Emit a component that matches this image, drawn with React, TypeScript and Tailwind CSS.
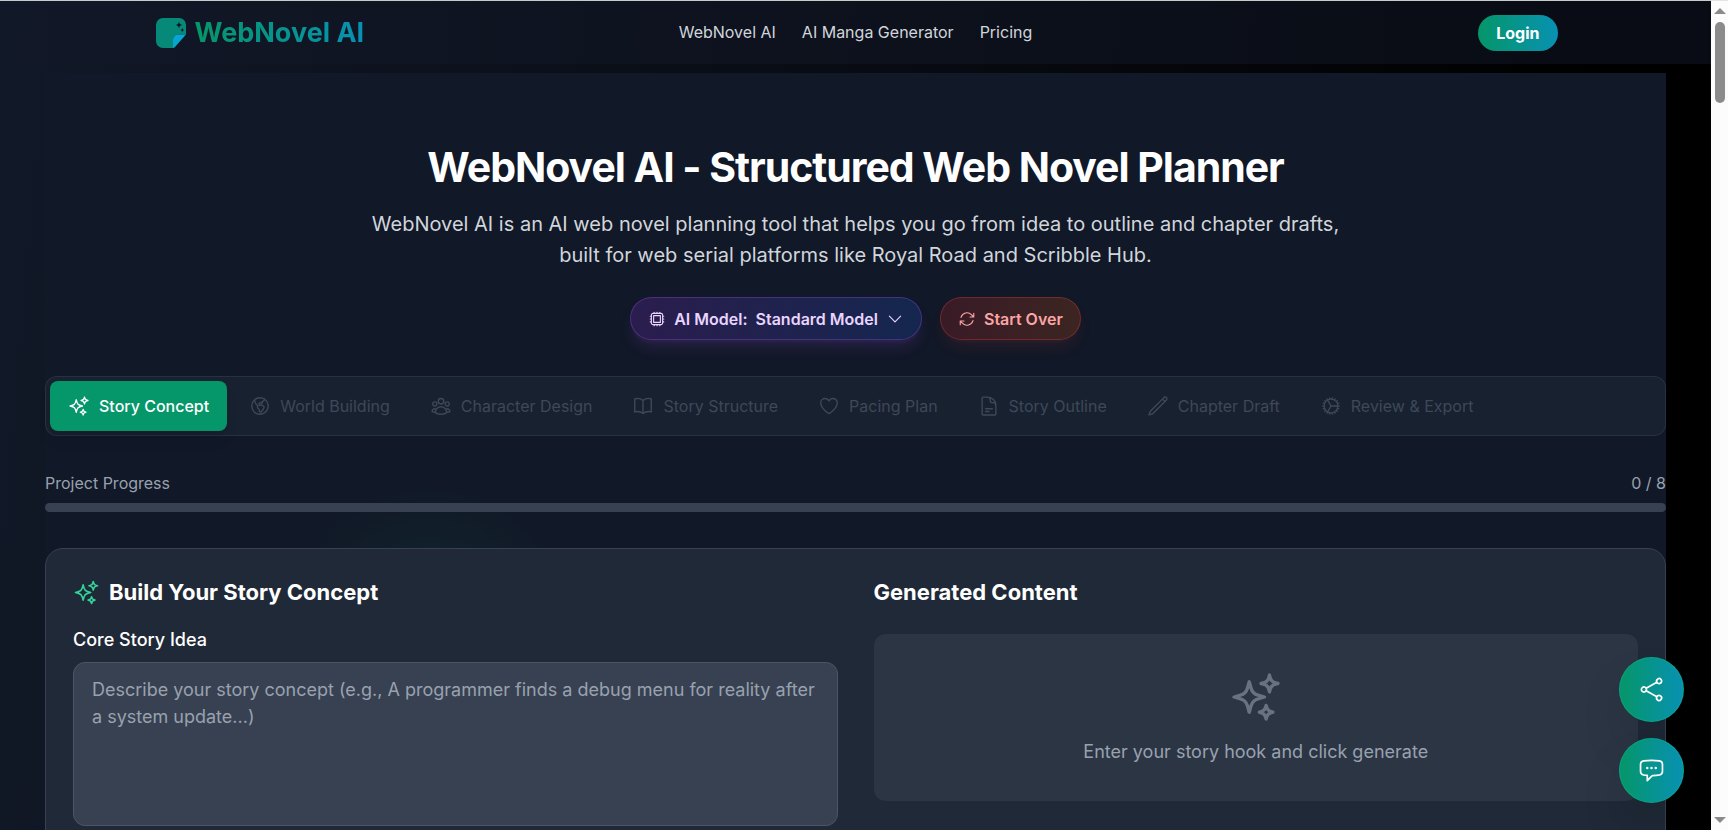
import React, { useState } from 'react';
import type { IconType } from 'react-icons';
import {
  HiOutlineArrowPath,
  HiOutlineBookOpen,
  HiOutlineChatBubbleLeftEllipsis,
  HiOutlineChevronDown,
  HiOutlineCog,
  HiOutlineCpuChip,
  HiOutlineDocumentText,
  HiOutlineGlobeAmericas,
  HiOutlineHeart,
  HiOutlinePencil,
  HiOutlineShare,
  HiOutlineSparkles,
  HiOutlineUserGroup,
} from 'react-icons/hi2';

const steps: { label: string; icon: IconType }[] = [
  { label: 'Story Concept', icon: HiOutlineSparkles },
  { label: 'World Building', icon: HiOutlineGlobeAmericas },
  { label: 'Character Design', icon: HiOutlineUserGroup },
  { label: 'Story Structure', icon: HiOutlineBookOpen },
  { label: 'Pacing Plan', icon: HiOutlineHeart },
  { label: 'Story Outline', icon: HiOutlineDocumentText },
  { label: 'Chapter Draft', icon: HiOutlinePencil },
  { label: 'Review & Export', icon: HiOutlineCog },
];

function Logo() {
  return (
    <svg viewBox="-2 -1 32 32" className="size-8" aria-hidden="true">
      <path d="M7 0h16a7 7 0 0 1 7 7v9.5H22a5 5 0 0 0-5 5V30H7a7 7 0 0 1-7-7V7a7 7 0 0 1 7-7z" fill="#07897a" />
      <path d="M30 16.5 18.500 29.500 17 30v-8.500a5 5 0 0 1 5-5z" fill="#06a6d0" />
      <path d="M23 3.500c.5 2.300 1 2.900 3.300 3.500-2.300.6-2.800 1.200-3.300 3.500-.5-2.300-1-2.900-3.300-3.500 2.300-.6 2.800-1.200 3.300-3.500z" fill="#0c1420" />
      <path d="M26.300 9.800c.3 1.400.7 1.800 2 2.200-1.300.4-1.700.8-2 2.200-.3-1.400-.7-1.800-2-2.200 1.300-.4 1.700-.8 2-2.200z" fill="#0c1420" />
    </svg>
  );
}

function Header() {
  return (
    <header className="border-t border-[#c5cdca] bg-[#111827]/50">
      <div className="mx-auto grid h-[63px] max-w-[1404px] grid-cols-[1fr_auto_1fr] items-center">
        <a href="#" className="flex items-center gap-[9px]">
          <Logo />
          <span className="bg-linear-to-r/srgb from-[#059669] to-[#0891b2] bg-clip-text text-[27px] leading-9 font-bold text-transparent">
            WebNovel AI
          </span>
        </a>
        <nav className="flex gap-[26px] pb-0.5 text-base text-gray-300">
          <a href="#" className="hover:text-white">WebNovel AI</a>
          <a href="#" className="hover:text-white">AI Manga Generator</a>
          <a href="#" className="hover:text-white">Pricing</a>
        </nav>
        <button
          type="button"
          className="justify-self-end rounded-full bg-linear-to-r/srgb from-[#059669] to-[#0891b2] px-[18px] py-1.5 text-base font-bold text-white"
        >
          Login
        </button>
      </div>
    </header>
  );
}

function Hero() {
  return (
    <section className="flex flex-col items-center pt-[69px] text-center">
      <h1 className="text-[41px] leading-[50px] font-bold tracking-tight text-white">
        WebNovel AI - Structured Web Novel Planner
      </h1>
      <p className="mt-[17px] max-w-[1008px] text-xl leading-[31px] text-gray-300">
        WebNovel AI is an AI web novel planning tool that helps you go from idea to outline and chapter drafts,
        built for web serial platforms like Royal Road and Scribble Hub.
      </p>
      <div className="mt-[26px] flex gap-[18px] text-base font-semibold">
        <button
          type="button"
          className="flex h-[43px] items-center gap-2 rounded-full border border-[#a855f7]/30 bg-linear-to-r/srgb from-[#9333ea]/20 to-[#2563eb]/20 px-[17px] text-[#e9d5ff] shadow-lg shadow-[#a855f7]/15"
        >
          <HiOutlineCpuChip className="size-[18px]" />
          <span>AI Model:</span>
          <span>Standard Model</span>
          <HiOutlineChevronDown className="size-[18px]" />
        </button>
        <button
          type="button"
          className="flex h-[43px] items-center gap-2 rounded-full border border-[#ef4444]/30 bg-linear-to-r/srgb from-[#dc2626]/20 to-[#ea580c]/20 px-[17px] text-[#fca5a5] shadow-lg shadow-[#ef4444]/10"
        >
          <HiOutlineArrowPath className="size-[18px]" />
          <span>Start Over</span>
        </button>
      </div>
    </section>
  );
}

function StepTabs({ current, onSelect }: { current: number; onSelect: (i: number) => void }) {
  return (
    <div className="mt-9 flex gap-1 rounded-xl border border-[#374151]/50 bg-[#1f2937]/50 p-1">
      {steps.map((step, i) => {
        const Icon = step.icon;
        const active = i === current;
        return (
          <button
            key={step.label}
            type="button"
            disabled={i > current}
            onClick={() => onSelect(i)}
            className={
              active
                ? 'flex h-[50px] items-center gap-[9px] rounded-lg bg-[#059669] px-[18px] text-base font-medium whitespace-nowrap text-white shadow-lg'
                : 'flex h-[50px] items-center gap-[9px] rounded-lg px-[18px] text-base whitespace-nowrap text-[#3e4858]'
            }
          >
            <Icon className="size-[22px]" />
            {step.label}
          </button>
        );
      })}
    </div>
  );
}

function Progress({ done, total }: { done: number; total: number }) {
  return (
    <div className="mt-[35px]">
      <div className="flex justify-between text-base text-gray-400">
        <span>Project Progress</span>
        <span>{done} / {total}</span>
      </div>
      <div className="mt-2 h-[9px] overflow-hidden rounded-full bg-[#374151]">
        <div className="h-full bg-[#059669]" style={{ width: `${(done / total) * 100}%` }} />
      </div>
    </div>
  );
}

function ConceptCard() {
  const [idea, setIdea] = useState('');

  return (
    <div className="mt-9 grid grid-cols-2 gap-9 rounded-[18px] border border-[#374151] bg-[#1f2937] p-[27px]">
      <section>
        <h2 className="flex items-center gap-[9px] text-[22px] leading-8 font-bold text-white">
          <HiOutlineSparkles className="size-[27px] text-[#34d399]" />
          Build Your Story Concept
        </h2>
        <label htmlFor="idea" className="mt-[18px] block text-lg leading-7 font-medium text-white">
          Core Story Idea
        </label>
        <textarea
          id="idea"
          value={idea}
          onChange={(e) => setIdea(e.target.value)}
          placeholder="Describe your story concept (e.g., A programmer finds a debug menu for reality after a system update...)"
          className="mt-2 block h-[164px] w-full resize-none rounded-xl border border-[#4b5563] bg-[#374151] px-[18px] py-[13px] text-lg leading-[27px] text-white placeholder:text-gray-400"
        />
      </section>
      <section>
        <h2 className="text-[22px] leading-8 font-bold text-white">Generated Content</h2>
        <div className="mt-[26px] flex flex-col items-center rounded-xl bg-[#374151]/50 py-9 text-gray-400">
          <HiOutlineSparkles className="size-[54px] text-gray-500" />
          <p className="mt-[14px] text-lg leading-[27px]">Enter your story hook and click generate</p>
        </div>
      </section>
    </div>
  );
}

function FloatingActions() {
  const style =
    'flex size-[65px] items-center justify-center rounded-full border border-[#10b981]/40 bg-linear-to-r/srgb from-[#059669] to-[#0891b2] text-white shadow-2xl';
  return (
    <div className="absolute right-[27px] bottom-[27px] flex flex-col gap-4">
      <button type="button" aria-label="Share" className={style}>
        <HiOutlineShare className="size-[27px]" />
      </button>
      <button type="button" aria-label="Chat" className={style}>
        <HiOutlineChatBubbleLeftEllipsis className="size-[27px]" />
      </button>
    </div>
  );
}

function Scrollbar() {
  return (
    <div className="flex w-[17px] shrink-0 flex-col items-center justify-between border-t border-[#e5e5e5] bg-[#fcfcfc] py-[7px]" aria-hidden="true">
      <div className="flex flex-col items-center gap-2">
        <svg viewBox="0 0 12 6" className="h-1.5 w-3"><path d="M0 6 6 0l6 6z" fill="#8b8b8b" /></svg>
        <div className="h-[81px] w-2.5 rounded-full bg-[#8b8b8b]" />
      </div>
      <svg viewBox="0 0 12 6" className="h-1.5 w-3"><path d="M0 0l6 6 6-6z" fill="#8b8b8b" /></svg>
    </div>
  );
}

export default function App() {
  const [step, setStep] = useState(0);

  return (
    <div className="flex h-screen overflow-hidden font-[Inter,sans-serif]">
      <div className="relative min-w-0 flex-1 overflow-hidden bg-[linear-gradient(95deg,#111827,#000_90%)]">
        <Header />
        <main className="mx-[45px] mt-[9px] bg-[#111827] bg-[radial-gradient(circle_at_385px_550px,#11282d_0,#111827_145px)]">
          <Hero />
          <StepTabs current={step} onSelect={setStep} />
          <Progress done={0} total={steps.length} />
          <ConceptCard />
        </main>
        <FloatingActions />
      </div>
      <Scrollbar />
    </div>
  );
}
